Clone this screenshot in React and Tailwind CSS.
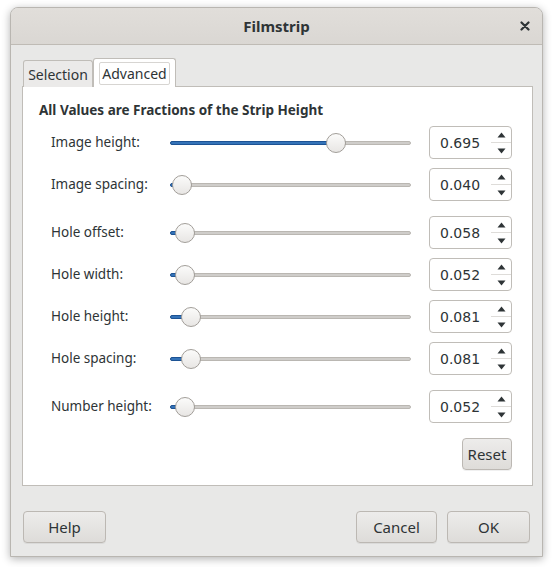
import React from 'react';

const rows = [
  { label: 'Image height:', value: '0.695', knob: 166, mt: 'mt-0' },
  { label: 'Image spacing:', value: '0.040', knob: 12, mt: 'mt-[9px]' },
  { label: 'Hole offset:', value: '0.058', knob: 15, mt: 'mt-[15px]' },
  { label: 'Hole width:', value: '0.052', knob: 15, mt: 'mt-[9px]' },
  { label: 'Hole height:', value: '0.081', knob: 21, mt: 'mt-[9px]' },
  { label: 'Hole spacing:', value: '0.081', knob: 21, mt: 'mt-[9px]' },
  { label: 'Number height:', value: '0.052', knob: 15, mt: 'mt-[15px]' },
];

const Slider = ({ knob }) => (
  <div className="relative w-[241px] h-[33px] flex items-center">
    {/* track */}
    <div className="w-full h-[4px] rounded-full bg-[#cfcdca] border border-[#bab7b2]" />
    {/* filled part */}
    <div
      className="absolute left-0 h-[4px] rounded-full bg-[#3473b8] border border-[#1d5394]"
      style={{ width: knob }}
    />
    {/* knob */}
    <div
      className="absolute w-[20px] h-[20px] rounded-full border border-[#a29e99] bg-gradient-to-b from-[#fbfbfa] to-[#e8e6e4]"
      style={{ left: knob - 10 }}
    />
  </div>
);

const SpinBox = ({ value }) => (
  <div className="w-[83px] h-[33px] flex rounded-[4px] border border-[#c0bdb8] bg-white">
    <div className="flex-1 flex items-center pl-[10px] pt-px text-[14px] text-[#2e3436] font-['DejaVu_Sans',sans-serif]">
      {value}
    </div>
    <div className="w-[20px] flex flex-col">
      <div className="flex-1 flex items-center justify-center border-b border-[#dedcd9]">
        <svg width="9" height="6" viewBox="0 0 9 6">
          <path d="M4.5 0.5 L8.5 5.5 L0.5 5.5 Z" fill="#2e3436" />
        </svg>
      </div>
      <div className="flex-1 flex items-center justify-center">
        <svg width="9" height="6" viewBox="0 0 9 6">
          <path d="M0.5 0.5 L8.5 0.5 L4.5 5.5 Z" fill="#2e3436" />
        </svg>
      </div>
    </div>
  </div>
);

const Button = ({ children, w }) => (
  <button
    type="button"
    className={`${w} h-[32px] rounded-[4px] border border-[#bcb8b3] bg-gradient-to-b from-[#edeceb] to-[#dedcd9] text-[15px] text-[#2e3436] shadow-[0_1px_0_rgba(0,0,0,0.06)]`}
  >
    {children}
  </button>
);

export default function App() {
  return (
    <div className="w-[553px] h-[567px] bg-white pt-[7px] pl-[10px] font-['Noto_Sans',sans-serif]">
      <div className="w-[533px] h-[550px] flex flex-col rounded-t-[8px] border border-[#b9b6b1] bg-[#e8e8e7] shadow-[0_2px_9px_rgba(0,0,0,0.3)] overflow-hidden">

        {/* Title bar */}
        <div className="h-[37px] shrink-0 flex items-center justify-center relative bg-gradient-to-b from-[#e1deda] to-[#dad7d3] border-b border-[#bfbbb5]">
          <span className="text-[15px] font-bold text-[#2e3436]">Filmstrip</span>
          <svg className="absolute right-[12px] top-[13px]" width="10" height="10" viewBox="0 0 10 10">
            <path d="M1.5 1.5 L8.5 8.5 M8.5 1.5 L1.5 8.5" stroke="#2e3436" strokeWidth="2.2" strokeLinecap="round" />
          </svg>
        </div>

        {/* Body */}
        <div className="flex-1 flex flex-col px-[11px] pt-[13px]">
          {/* Tabs */}
          <div className="flex items-end h-[29px] -mb-px relative z-10 pl-px">
            <div className="h-[27px] w-[70px] flex items-center justify-center rounded-t-[3px] border border-b-0 border-[#c0bdb8] bg-[#ebeae9] text-[14px] text-[#2e3436]">
              Selection
            </div>
            <div className="h-[29px] w-[83px] flex items-center justify-center rounded-t-[3px] border border-b-0 border-[#c0bdb8] bg-white px-[5px] pt-[3px] pb-[2px]">
              <div className="w-full h-full flex items-center justify-center rounded-[2px] border border-[#d7d5d2] text-[14px] text-[#2e3436]">
                Advanced
              </div>
            </div>
          </div>

          {/* Panel */}
          <div className="w-[511px] h-[400px] border border-[#c0bdb8] bg-white flex flex-col pl-[16px] pr-[20px] pt-[14px]">
            <div className="text-[13.5px] font-bold text-[#2e3436] leading-[18px]">
              All Values are Fractions of the Strip Height
            </div>
            <div className="flex flex-col mt-[7px] pl-[12px]">
              {rows.map((r) => (
                <div key={r.label} className={`flex items-center h-[33px] ${r.mt}`}>
                  <div className="w-[119px] text-[13.5px] text-[#2e3436]">{r.label}</div>
                  <Slider knob={r.knob} />
                  <div className="ml-auto">
                    <SpinBox value={r.value} />
                  </div>
                </div>
              ))}
            </div>
            <div className="flex justify-end mt-[15px]">
              <Button w="w-[50px]">Reset</Button>
            </div>
          </div>

          {/* Bottom buttons */}
          <div className="flex items-center mt-[25px] pl-px pr-px">
            <Button w="w-[83px]">Help</Button>
            <div className="ml-auto flex gap-[10px]">
              <Button w="w-[81px]">Cancel</Button>
              <Button w="w-[83px]">OK</Button>
            </div>
          </div>
        </div>
      </div>
    </div>
  );
}
